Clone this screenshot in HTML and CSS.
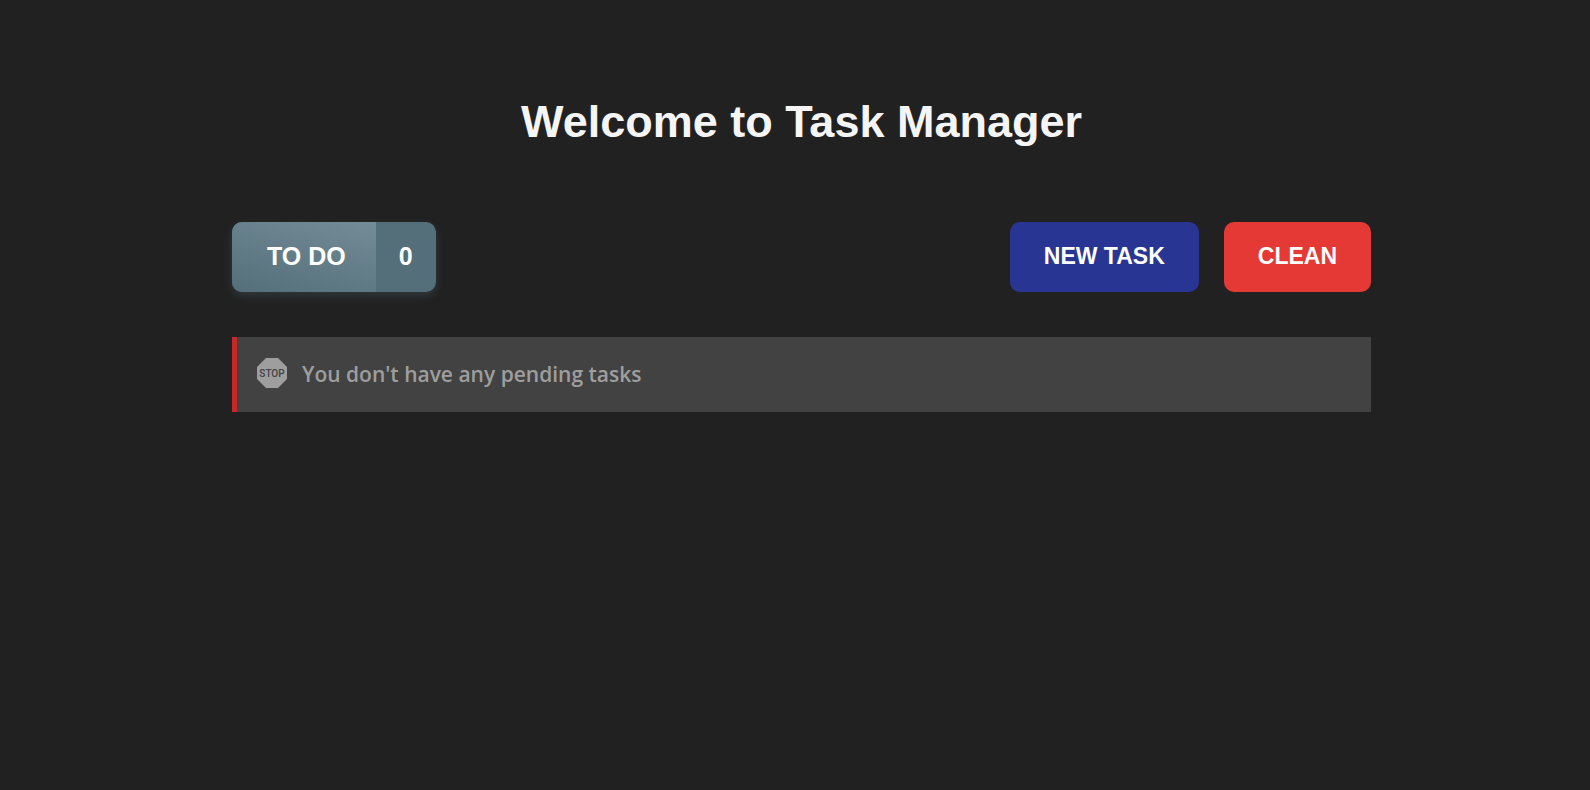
FILE: index.html
```html
<!DOCTYPE html>
<html lang="en">
<head>
<meta charset="utf-8">
<meta name="viewport" content="width=device-width, initial-scale=1">
<title>Task Manager</title>
<link rel="stylesheet" href="styles.css">
</head>
<body>
<main class="page">
  <h1 class="title">Welcome to Task Manager</h1>
  <div class="toolbar">
    <div class="counter">
      <span class="counter-label">TO DO</span>
      <span class="counter-value">0</span>
    </div>
    <div class="actions">
      <button class="button button-new" type="button">NEW TASK</button>
      <button class="button button-clean" type="button">CLEAN</button>
    </div>
  </div>
  <div class="notice" role="status">
    <svg class="notice-icon" viewBox="0 0 30 30" aria-hidden="true">
      <path d="M9 0h12l9 9v12l-9 9H9l-9-9V9z"/>
      <text x="15" y="19" text-anchor="middle">STOP</text>
    </svg>
    <p class="notice-text">You don't have any pending tasks</p>
  </div>
</main>
</body>
</html>
```
FILE: styles.css
```css
* {
  box-sizing: border-box;
}

body {
  margin: 0;
  background: #212121;
  color: #fff;
  font-family: "Liberation Sans", Arial, sans-serif;
}

.page {
  padding: 96px 219px 40px 232px;
}

.title {
  margin: 0 0 74px;
  color: #f5f5f5;
  font-size: 45px;
  line-height: 52px;
  text-align: center;
}

.toolbar {
  display: flex;
  justify-content: space-between;
  margin-bottom: 45px;
}

.counter {
  display: flex;
  height: 70px;
  overflow: hidden;
  border-radius: 10px;
  background: #546e7a;
  box-shadow: 0 4px 8px rgba(84, 110, 122, 0.3);
  font-size: 25px;
  font-weight: 700;
  line-height: 68px;
}

.counter-label {
  padding: 0 30px 0 35px;
  background: linear-gradient(15deg, #546e7a, #738c97);
}

.counter-value {
  width: 60px;
  text-align: center;
}

.actions {
  display: flex;
  gap: 25px;
}

.button {
  height: 70px;
  padding: 0 34px 2px;
  border: 0;
  border-radius: 10px;
  color: #fff;
  font: 700 23px "Liberation Sans", Arial, sans-serif;
  cursor: pointer;
}

.button-new {
  background: #283593;
}

.button-clean {
  background: #e53935;
}

.notice {
  display: flex;
  gap: 15px;
  padding: 21px 20px 22px;
  border-left: 5px solid #c62828;
  background: #424242;
  color: #9e9e9e;
}

.notice-icon {
  width: 30px;
  height: 30px;
  fill: #9e9e9e;
}

.notice-icon text {
  fill: #424242;
  font: 500 10px Roboto, sans-serif;
}

.notice-text {
  margin: 0;
  font: 600 21px/32px "Open Sans", "Noto Sans", sans-serif;
}
```
